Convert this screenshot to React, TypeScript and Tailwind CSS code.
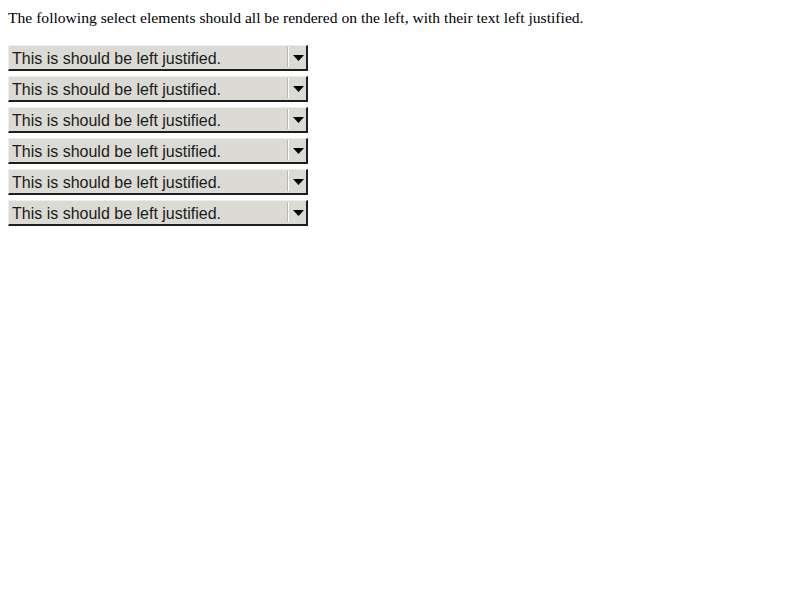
import React from 'react';

const rows = [0, 1, 2, 3, 4, 5];

const FakeSelect: React.FC<{ label: string }> = ({ label }) => {
    return (
        <div className="flex items-stretch w-[300px] h-[26px] bg-[#dcdad5] border-t border-l border-t-[#eeedeb] border-l-[#eeedeb] border-r-2 border-b-2 border-r-[#1e1e1e] border-b-[#1e1e1e] mb-[5px]">
            <div className="flex-1 flex items-center pl-[3px] pt-[2px] text-[16px] text-[#1a1a1a] font-['Liberation_Sans',Arial,sans-serif] whitespace-nowrap">
                {label}
            </div>
            <div className="flex items-center mt-px mb-[2px]">
                <div className="w-px h-full bg-[#b8b6b1]" />
                <div className="w-px h-full bg-white" />
            </div>
            <div className="w-[17px] flex items-center justify-center pl-px">
                <svg width="11" height="6" viewBox="0 0 11 6">
                    <polygon points="0,0 11,0 5.5,6" fill="#000" />
                </svg>
            </div>
        </div>
    );
};

export default function App() {
    return (
        <div className="p-2 bg-white min-h-[600px] font-['Liberation_Serif','Times_New_Roman',serif] text-[15.6px] text-black">
            <p className="leading-[18px] pt-px mb-[18px]">
                The following select elements should all be rendered on the left, with their text left justified.
            </p>
            <div className="flex flex-col items-start">
                {rows.map(i => (
                    <FakeSelect key={i} label="This is should be left justified." />
                ))}
            </div>
        </div>
    );
}
